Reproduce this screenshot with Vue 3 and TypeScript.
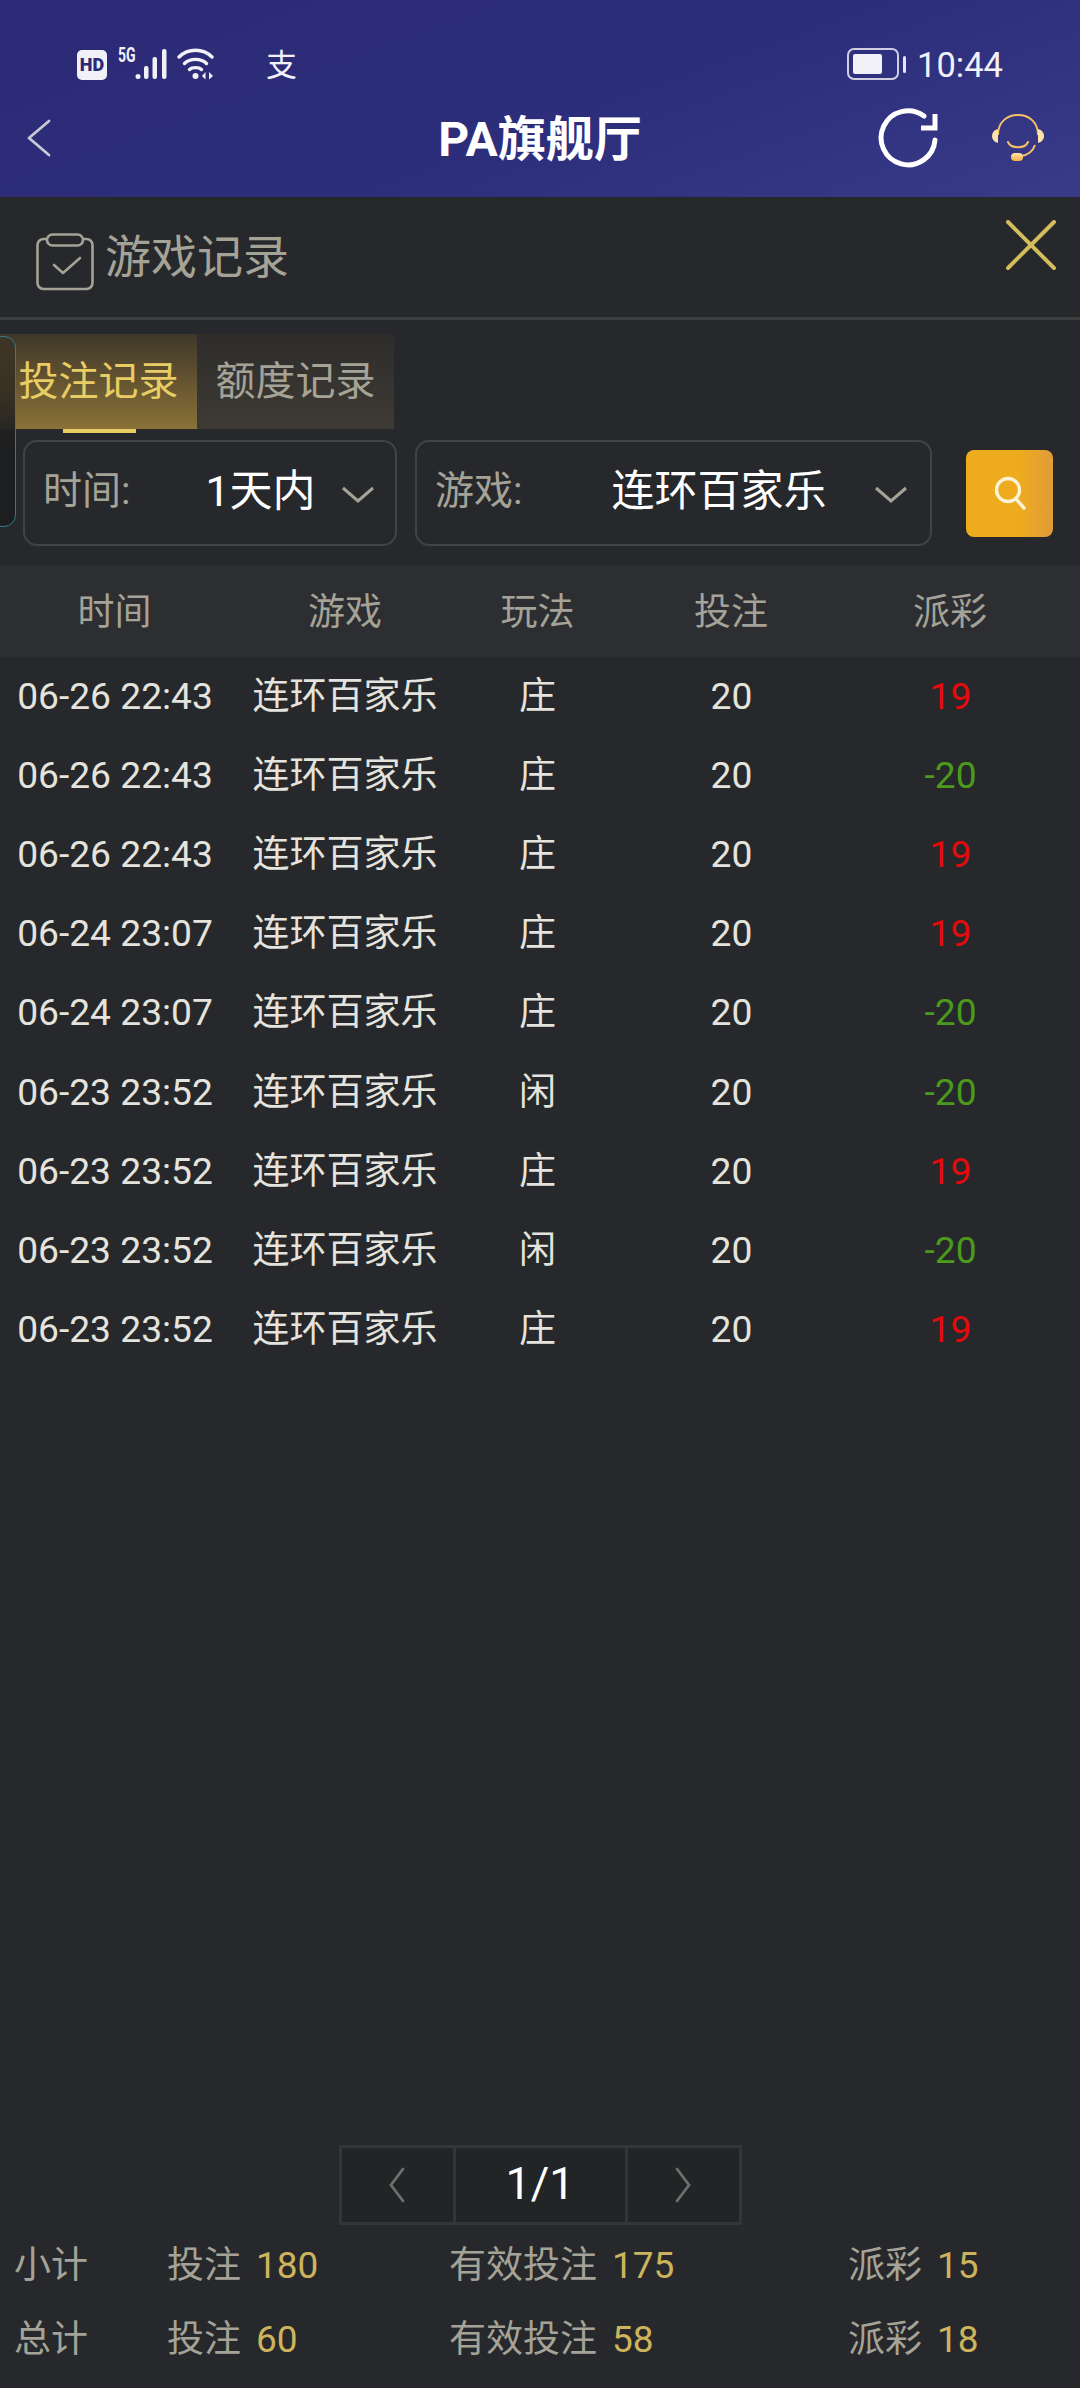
<script setup lang="ts">
interface BetRow {
  time: string
  game: string
  play: string
  bet: number
  payout: number
}

const columns: string[] = ['时间', '游戏', '玩法', '投注', '派彩']

const rows: BetRow[] = [
  { time: '06-26 22:43', game: '连环百家乐', play: '庄', bet: 20, payout: 19 },
  { time: '06-26 22:43', game: '连环百家乐', play: '庄', bet: 20, payout: -20 },
  { time: '06-26 22:43', game: '连环百家乐', play: '庄', bet: 20, payout: 19 },
  { time: '06-24 23:07', game: '连环百家乐', play: '庄', bet: 20, payout: 19 },
  { time: '06-24 23:07', game: '连环百家乐', play: '庄', bet: 20, payout: -20 },
  { time: '06-23 23:52', game: '连环百家乐', play: '闲', bet: 20, payout: -20 },
  { time: '06-23 23:52', game: '连环百家乐', play: '庄', bet: 20, payout: 19 },
  { time: '06-23 23:52', game: '连环百家乐', play: '闲', bet: 20, payout: -20 },
  { time: '06-23 23:52', game: '连环百家乐', play: '庄', bet: 20, payout: 19 },
]

const totals = [
  { label: '小计', bet: 180, valid: 175, payout: 15 },
  { label: '总计', bet: 60, valid: 58, payout: 18 },
]
</script>

<template>
  <div class="page">
    <header class="top">
      <div class="status">
        <span class="hd">HD</span>
        <span class="net">5G</span>
        <svg class="signal" width="33" height="32" viewBox="0 0 33 32" fill="#f2f1f8">
          <circle cx="3" cy="28.500" r="2.500" />
          <rect x="9" y="18" width="4.500" height="13" rx="2" />
          <rect x="17.500" y="9" width="4.500" height="22" rx="2" />
          <rect x="27" y="1" width="4.500" height="30" rx="2" />
        </svg>
        <svg class="wifi" width="37" height="32" viewBox="0 0 37 32" fill="none" stroke="#f2f1f8" stroke-width="3.400" stroke-linecap="round">
          <path d="M2 9C11 0 26 0 35 9" />
          <path d="M7.500 15.500C13 10 24 10 29.500 15.500" />
          <path d="M12.500 21.500C15 19 22 19 24.500 21.500" />
          <circle cx="18.500" cy="28" r="3" fill="#f2f1f8" stroke="none" />
          <path d="M28.500 24L25 28L28.500 31.500ZM32 24L36 28L32 31.500Z" fill="#f2f1f8" stroke="none" />
        </svg>
        <span class="pay">支</span>
        <svg class="battery" width="59" height="32" viewBox="0 0 59 32" fill="none">
          <rect x="1" y="1" width="50" height="30" rx="6" stroke="#cfcfe4" stroke-width="2" />
          <rect x="6" y="6" width="29" height="20" rx="2" fill="#f2f1f8" />
          <rect x="56" y="8" width="3" height="17" rx="1.500" fill="#e6e6f0" />
        </svg>
        <span class="clock">10:44</span>
      </div>
      <div class="navbar">
        <svg class="back" width="26" height="38" viewBox="0 0 26 38" fill="none" stroke="#c9c9d6" stroke-width="2.800" stroke-linecap="round" stroke-linejoin="round">
          <path d="M23 2L3 19L23 36" />
        </svg>
        <h1 class="title">PA旗舰厅</h1>
        <svg class="refresh" width="62" height="62" viewBox="0 0 62 62" fill="none">
          <path d="M58 33A27 27 0 1 1 47 9" stroke="#fff" stroke-width="5" stroke-linecap="round" />
          <path d="M58 7V21H44" stroke="#fff" stroke-width="5" stroke-linejoin="miter" />
        </svg>
        <svg class="support" width="54" height="50" viewBox="0 0 54 50" fill="none">
          <defs>
            <linearGradient id="gold" x1="0" y1="0" x2="0" y2="1">
              <stop offset="0" stop-color="#fbe3a9" />
              <stop offset="1" stop-color="#f7b23c" />
            </linearGradient>
          </defs>
          <path d="M7 22C7 9 16 2 27 2C38 2 47 9 47 22" stroke="#f6c067" stroke-width="2" />
          <path d="M7 16C3 17 1 20 1 23C1 26 3 29 7 30Z" fill="#fbe3a9" />
          <path d="M47 16C51 17 53 20 53 23C53 26 51 29 47 30Z" fill="#fbe3a9" />
          <path d="M17 29C20 36 34 36 37 29" stroke="#f6c067" stroke-width="2" stroke-linecap="round" />
          <path d="M44 32C42 38 37 42 30 43" stroke="#f6c067" stroke-width="2" />
          <rect x="20" y="40" width="12" height="8" rx="4" fill="url(#gold)" />
        </svg>
      </div>
    </header>

    <section class="panel-head">
      <svg class="record-icon" width="58" height="58" viewBox="0 0 58 58" fill="none" stroke="#a5a397" stroke-width="2.600">
        <rect x="1.500" y="6" width="55" height="50" rx="6" />
        <rect x="11" y="1.500" width="36" height="11" rx="5.500" fill="#26282b" />
        <path d="M18 32L27 40L44 25" stroke-linecap="round" stroke-linejoin="round" />
      </svg>
      <span class="panel-title">游戏记录</span>
      <svg class="close" width="50" height="50" viewBox="0 0 50 50" fill="none" stroke="#d3bc5b" stroke-width="4" stroke-linecap="round">
        <path d="M2 2L48 48M48 2L2 48" />
      </svg>
    </section>

    <nav class="tabs">
      <div class="side-tag"></div>
      <button class="tab tab--active">投注记录</button>
      <button class="tab">额度记录</button>
    </nav>

    <div class="filters">
      <div class="select select--time">
        <span class="select-label">时间:</span>
        <span class="select-value">1天内</span>
        <svg class="chevron" width="32" height="18" viewBox="0 0 32 18" fill="none" stroke="#a5a397" stroke-width="3">
          <path d="M1 2L16 15L31 2" />
        </svg>
      </div>
      <div class="select select--game">
        <span class="select-label">游戏:</span>
        <span class="select-value">连环百家乐</span>
        <svg class="chevron" width="32" height="18" viewBox="0 0 32 18" fill="none" stroke="#a5a397" stroke-width="3">
          <path d="M1 2L16 15L31 2" />
        </svg>
      </div>
      <button class="search">
        <svg width="32" height="34" viewBox="0 0 32 34" fill="none" stroke="#fdf3d6" stroke-width="3.400" stroke-linecap="round">
          <circle cx="14" cy="14" r="11.500" />
          <path d="M22 23L30 32" />
        </svg>
      </button>
    </div>

    <div class="table-row table-head">
      <span v-for="col in columns" :key="col">{{ col }}</span>
    </div>
    <div class="table-body">
      <div v-for="(row, i) in rows" :key="i" class="table-row">
        <span class="num">{{ row.time }}</span>
        <span>{{ row.game }}</span>
        <span>{{ row.play }}</span>
        <span class="num">{{ row.bet }}</span>
        <span class="num" :class="row.payout > 0 ? 'win' : 'lose'">{{ row.payout }}</span>
      </div>
    </div>

    <div class="pager">
      <button class="pager-btn">
        <svg width="18" height="36" viewBox="0 0 18 36" fill="none" stroke="#6d6e6e" stroke-width="2.800" stroke-linecap="round">
          <path d="M15 2L3 18L15 34" />
        </svg>
      </button>
      <span class="pager-num">1/1</span>
      <button class="pager-btn">
        <svg width="18" height="36" viewBox="0 0 18 36" fill="none" stroke="#6d6e6e" stroke-width="2.800" stroke-linecap="round">
          <path d="M3 2L15 18L3 34" />
        </svg>
      </button>
    </div>

    <footer class="totals">
      <div v-for="t in totals" :key="t.label" class="total-row">
        <span>{{ t.label }}</span>
        <span>投注<b>{{ t.bet }}</b></span>
        <span>有效投注<b>{{ t.valid }}</b></span>
        <span>派彩<b>{{ t.payout }}</b></span>
      </div>
    </footer>
  </div>
</template>

<style scoped>
.page {
  width: 1080px;
  height: 2388px;
  display: flex;
  flex-direction: column;
  background: #26282b;
  color: #e4e3dd;
  font-family: Roboto, "Noto Sans CJK SC", sans-serif;
  overflow: hidden;
}

/* header */
.top {
  height: 197px;
  flex-shrink: 0;
  background: linear-gradient(160deg, #2b2a76 0%, #2d2e7b 55%, #393a88 100%);
  color: #fff;
}
.status {
  height: 98px;
  padding: 48px 0 0 77px;
  box-sizing: border-box;
  display: flex;
  align-items: flex-start;
}
.hd {
  width: 30px;
  height: 30px;
  margin-top: 2px;
  border-radius: 5px;
  background: #f2f1f8;
  color: #2b2a76;
  font-size: 18px;
  font-weight: 900;
  line-height: 30px;
  text-align: center;
}
.net {
  width: 17px;
  margin-left: 11px;
  color: #f2f1f8;
  font-size: 20px;
  font-weight: 700;
  line-height: 15px;
  white-space: nowrap;
  transform: scaleX(0.7);
  transform-origin: left;
}
.wifi { margin-left: 9px; }
.pay {
  margin-left: 52px;
  width: 32px;
  color: #f2f1f8;
  font-size: 31px;
  line-height: 36px;
}
.battery { margin-left: 549px; }
.clock {
  margin-left: 11px;
  color: #f2f1f8;
  font-size: 34.500px;
  line-height: 34px;
}

.navbar {
  height: 99px;
  padding: 0 35px 0 26px;
  display: flex;
  align-items: center;
  position: relative;
}
.back { margin-top: -19px; }
.title {
  position: absolute;
  left: 0;
  right: 0;
  top: 0;
  margin: 0;
  text-align: center;
  font-size: 48px;
  font-weight: 700;
  line-height: 84px;
}
.refresh {
  margin-left: auto;
  margin-top: -19px;
}
.support {
  margin-left: 52px;
  margin-top: -19px;
}

/* panel title */
.panel-head {
  height: 123px;
  flex-shrink: 0;
  box-sizing: border-box;
  border-bottom: 3px solid #3d3e3f;
  padding: 0 24px 0 36px;
  display: flex;
  align-items: flex-start;
}
.record-icon { margin-top: 36px; }
.panel-title {
  margin-left: 11px;
  margin-top: 30px;
  color: #a5a397;
  font-size: 46px;
  line-height: 60px;
}
.close {
  margin-left: auto;
  margin-top: 23px;
}

/* tabs */
.tabs {
  height: 95px;
  margin-top: 14px;
  flex-shrink: 0;
  display: flex;
  position: relative;
}
.tab {
  width: 197px;
  padding: 0;
  border: none;
  background: linear-gradient(180deg, #2e2d2c 0%, #3e3a34 100%);
  color: #a5a397;
  font-family: inherit;
  font-size: 40px;
  line-height: 90px;
  text-align: center;
  position: relative;
}
.tab--active {
  background: linear-gradient(180deg, #3f372a 0%, #8a7237 100%);
  color: #e8cd64;
}
.tab--active::after {
  content: "";
  position: absolute;
  left: 63px;
  bottom: -4px;
  width: 73px;
  height: 4px;
  background: #e8cd64;
}
.side-tag {
  position: absolute;
  left: -10px;
  top: 2px;
  width: 26px;
  height: 191px;
  box-sizing: border-box;
  border: 1px solid #2f7d8a;
  border-radius: 12px;
  background: linear-gradient(180deg, rgba(58, 48, 32, 0.6), #1d1e20 60%);
  z-index: 1;
}

/* filters */
.filters {
  height: 106px;
  margin-top: 11px;
  flex-shrink: 0;
  padding: 0 27px 0 23px;
  display: flex;
  align-items: center;
}
.select {
  height: 106px;
  box-sizing: border-box;
  border: 2px solid #424344;
  border-radius: 14px;
  display: flex;
  align-items: center;
  padding-left: 18px;
  position: relative;
}
.select--time { width: 374px; }
.select--game {
  width: 517px;
  margin-left: 18px;
}
.select-label {
  color: #a5a397;
  font-size: 39px;
  margin-top: -12px;
}
.select-value {
  color: #fff;
  font-size: 43px;
  margin-top: -12px;
}
.select--time .select-value { margin-left: 75px; }
.select--game .select-value { margin-left: 89px; }
.chevron {
  position: absolute;
  right: 21px;
  top: 44px;
}
.select--game .chevron { right: 23px; }
.search {
  width: 87px;
  height: 87px;
  margin-left: auto;
  padding: 0;
  border: none;
  border-radius: 8px;
  background: linear-gradient(90deg, #eeab1d 0%, #eeab1d 60%, #e09c38 100%);
  display: flex;
  align-items: center;
  justify-content: center;
}

/* table */
.table-row {
  display: grid;
  grid-template-columns: 229px 232px 153px 234px 204px;
  align-items: center;
  text-align: center;
  height: 79.200px;
  font-size: 37px;
}
.table-head {
  height: 92px;
  margin-top: 19px;
  padding-bottom: 5px;
  box-sizing: border-box;
  flex-shrink: 0;
  background: #2c2e32;
  color: #a5a397;
}
.table-body {
  flex: 1;
  margin-top: -4px;
}
.num {
  padding-top: 6px;
  padding-left: 1px;
  font-size: 37.200px;
}
.win { color: #e30b0b; }
.lose { color: #4b9a1c; }

/* pager */
.pager {
  align-self: center;
  height: 80px;
  box-sizing: border-box;
  flex-shrink: 0;
  border: 3px solid #333536;
  background: #222526;
  display: flex;
}
.pager-btn {
  width: 111px;
  padding: 0;
  border: none;
  background: none;
  display: flex;
  align-items: center;
  justify-content: center;
}
.pager-num {
  width: 175px;
  box-sizing: border-box;
  border-left: 3px solid #333536;
  border-right: 3px solid #333536;
  color: #fff;
  font-size: 45px;
  line-height: 72px;
  text-align: center;
}

/* totals */
.totals {
  height: 163px;
  flex-shrink: 0;
}
.total-row {
  height: 74px;
  padding-left: 14px;
  display: grid;
  grid-template-columns: 153px 282px 399px 1fr;
  align-items: center;
  color: #a5a397;
  font-size: 37px;
}
.total-row b {
  margin-left: 15px;
  color: #cdb45c;
  font-weight: 400;
}
</style>

<style>
html, body { background: #26282b; }
</style>
